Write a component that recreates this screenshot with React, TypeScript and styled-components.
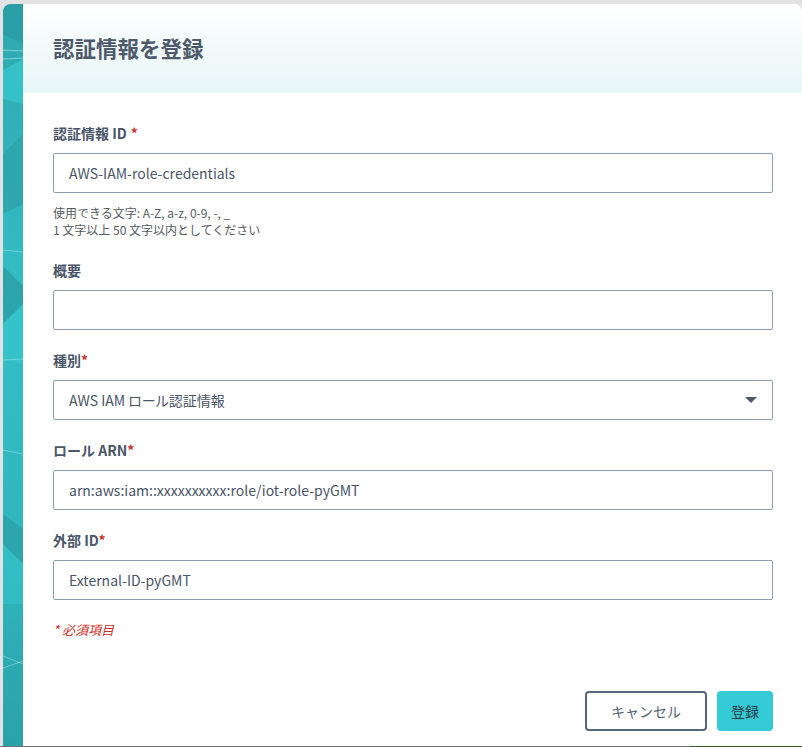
import React, { memo } from 'react'
import styled, { createGlobalStyle } from 'styled-components'

const GlobalStyle = createGlobalStyle`
  html, body {
    margin: 0;
    padding: 0;
    background: #e2e2e2;
  }
  body {
    font-family: 'Noto Sans CJK JP', 'Noto Sans', sans-serif;
    color: #4a5568;
  }
`

const Page = styled.div`
  width: 802px;
  height: 747px;
  overflow: hidden;
  padding: 4px 0 0 3px;
  box-sizing: border-box;
  display: flex;
  flex-direction: column;
`

const Modal = styled.div`
  flex: 1;
  display: flex;
  background: #fff;
  border-radius: 8px 8px 0 0;
  overflow: hidden;
`

const Stripe = styled.div`
  width: 20px;
  flex-shrink: 0;
  background: linear-gradient(180deg, #2ea8ae 0%, #33bec5 40%, #30b6bd 75%, #2aa2a8 100%);
  svg {
    display: block;
    width: 20px;
    height: 100%;
  }
`

const Main = styled.div`
  flex: 1;
  display: flex;
  flex-direction: column;
`

const Header = styled.div`
  height: 89px;
  padding: 0 30px;
  display: flex;
  align-items: center;
  background: linear-gradient(180deg, #ffffff 0%, #f3fafb 45%, #e7f6f7 100%);
`

const Title = styled.h1`
  margin: 0 0 2px;
  font-size: 21.5px;
  font-weight: 700;
  color: #4e5a6b;
`

const Body = styled.div`
  padding: 30px 29px 0 30px;
  display: flex;
  flex-direction: column;
`

const Field = styled.div`
  display: flex;
  flex-direction: column;
  margin-bottom: 20px;
`

const Label = styled.label`
  font-size: 14px;
  font-weight: 700;
  line-height: 20px;
  color: #4a5568;
  margin-bottom: 10px;
`

const Required = styled.span<{ $gap?: boolean }>`
  color: #d0302a;
  margin-left: ${(p) => (p.$gap ? '4px' : '0')};
`

const Input = styled.input`
  height: 40px;
  box-sizing: border-box;
  border: 1px solid #8e9eb2;
  border-radius: 2px;
  padding: 0 15px;
  font-family: inherit;
  font-size: 14px;
  color: #4a5568;
  background: #fff;
  outline: none;
`

const SelectBox = styled.div`
  height: 40px;
  box-sizing: border-box;
  border: 1px solid #8e9eb2;
  border-radius: 2px;
  padding: 0 15px;
  display: flex;
  align-items: center;
  justify-content: space-between;
  font-size: 14px;
  color: #4a5568;
  font-feature-settings: 'palt';
`

const Caret = styled.span`
  width: 0;
  height: 0;
  border-left: 6px solid transparent;
  border-right: 6px solid transparent;
  border-top: 6px solid #4e5a6b;
`

const Help = styled.div`
  margin: 11px 0 2px;
  font-size: 12px;
  line-height: 17px;
  color: #555b63;
`

const RequiredNote = styled.div`
  font-size: 13px;
  font-style: italic;
  color: #d0302a;
`

const Footer = styled.div`
  margin-top: auto;
  padding: 0 29px 15px 0;
  display: flex;
  justify-content: flex-end;
  gap: 10px;
`

const Button = styled.button<{ $primary?: boolean }>`
  height: 40px;
  box-sizing: border-box;
  border-radius: 4px;
  font-family: inherit;
  font-size: 14px;
  cursor: pointer;
  padding: 0 14px;
  min-width: ${(p) => (p.$primary ? '56px' : '122px')};
  border: ${(p) => (p.$primary ? 'none' : '2px solid #56657a')};
  background: ${(p) => (p.$primary ? '#33cbd6' : '#fff')};
  color: ${(p) => (p.$primary ? '#2f3a46' : '#56657a')};
`

const BottomRule = styled.div`
  height: 1px;
  margin-left: -3px;
  background: linear-gradient(90deg, #6e6e6e 0, #6e6e6e 690px, #2f5a1e 690px, #2f5a1e 100%);
`

function StripeArt() {
  return (
    <svg viewBox="0 0 20 742" preserveAspectRatio="none">
      <polygon points="0,0 20,0 20,40 0,30" fill="#2a9fa6" />
      <polygon points="0,66 20,55 20,100 0,95" fill="#37c6cd" opacity="0.8" />
      <line x1="0" y1="46" x2="20" y2="47" stroke="#bfeff2" strokeWidth="0.8" opacity="0.7" />
      <line x1="0" y1="55" x2="20" y2="54" stroke="#bfeff2" strokeWidth="0.8" opacity="0.7" />
      <polygon points="0,150 20,130 20,200 0,210" fill="#2b9ea4" opacity="0.6" />
      <line x1="0" y1="246" x2="20" y2="248" stroke="#bfeff2" strokeWidth="0.7" opacity="0.6" />
      <polygon points="0,262 20,282 20,300 0,320" fill="#2a9aa0" opacity="0.7" />
      <polygon points="0,320 20,300 20,360 0,356" fill="#37c5cc" opacity="0.7" />
      <line x1="0" y1="356" x2="20" y2="355" stroke="#bfeff2" strokeWidth="0.7" opacity="0.6" />
      <line x1="0" y1="446" x2="20" y2="450" stroke="#bfeff2" strokeWidth="0.7" opacity="0.6" />
      <polygon points="0,510 20,525 20,560 0,540" fill="#2a9aa0" opacity="0.6" />
      <polygon points="0,540 20,560 20,600 0,600" fill="#36c3ca" opacity="0.6" />
      <line x1="0" y1="652" x2="20" y2="660" stroke="#bfeff2" strokeWidth="0.7" opacity="0.6" />
      <line x1="0" y1="664" x2="20" y2="657" stroke="#bfeff2" strokeWidth="0.7" opacity="0.6" />
    </svg>
  )
}

export default memo(function App() {
  return (
    <>
      <GlobalStyle />
      <Page>
        <Modal>
          <Stripe>
            <StripeArt />
          </Stripe>
          <Main>
            <Header>
              <Title>認証情報を登録</Title>
            </Header>
            <Body>
              <Field>
                <Label>
                  認証情報 ID<Required $gap>*</Required>
                </Label>
                <Input defaultValue="AWS-IAM-role-credentials" />
                <Help>
                  使用できる文字: A-Z, a-z, 0-9, -, _
                  <br />1 文字以上 50 文字以内としてください
                </Help>
              </Field>
              <Field>
                <Label>概要</Label>
                <Input defaultValue="" />
              </Field>
              <Field>
                <Label>
                  種別<Required>*</Required>
                </Label>
                <SelectBox>
                  <span>AWS IAM ロール認証情報</span>
                  <Caret />
                </SelectBox>
              </Field>
              <Field>
                <Label>
                  ロール ARN<Required>*</Required>
                </Label>
                <Input defaultValue="arn:aws:iam::xxxxxxxxxx:role/iot-role-pyGMT" />
              </Field>
              <Field>
                <Label>
                  外部 ID<Required>*</Required>
                </Label>
                <Input defaultValue="External-ID-pyGMT" />
              </Field>
              <RequiredNote>* 必須項目</RequiredNote>
            </Body>
            <Footer>
              <Button>キャンセル</Button>
              <Button $primary>登録</Button>
            </Footer>
          </Main>
        </Modal>
        <BottomRule />
      </Page>
    </>
  )
})
